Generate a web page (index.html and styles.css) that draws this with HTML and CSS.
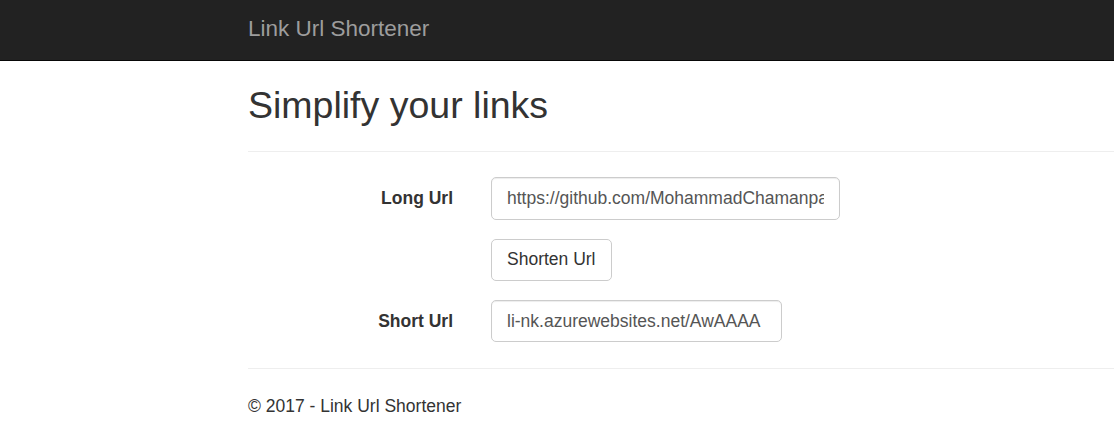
FILE: index.html
```html
<!DOCTYPE html>
<html lang="en">
<head>
<meta charset="utf-8">
<title>Link Url Shortener</title>
<link rel="stylesheet" href="styles.css">
</head>
<body>
<header class="navbar">
  <div class="container">
    <a class="brand" href="#">Link Url Shortener</a>
  </div>
</header>
<main class="container body-content">
  <h1 class="title">Simplify your links</h1>
  <hr class="rule">
  <form class="form">
    <div class="form-row">
      <label class="label" for="longUrl">Long Url</label>
      <input class="input input-long" id="longUrl" type="text" value="https://github.com/MohammadChamanpara/link">
    </div>
    <div class="form-row">
      <span class="label"></span>
      <button class="btn" type="button">Shorten Url</button>
    </div>
    <div class="form-row">
      <label class="label" for="shortUrl">Short Url</label>
      <input class="input input-short" id="shortUrl" type="text" value="li-nk.azurewebsites.net/AwAAAA">
    </div>
  </form>
  <hr class="rule rule-footer">
  <footer class="footer">
    <p class="copy">© 2017 - Link Url Shortener</p>
  </footer>
</main>
</body>
</html>
```
FILE: styles.css
```css
* { box-sizing: border-box; }
html, body { margin: 0; padding: 0; }
body {
  font-family: "Liberation Sans", Arial, sans-serif;
  font-size: 17.5px;
  line-height: 25px;
  color: #333;
  background: #fff;
  overflow: hidden;
}
.container {
  margin-left: 248px;
}
.navbar {
  background: #222;
  height: 61px;
  border-bottom: 1px solid #080808;
}
.brand {
  display: block;
  padding-top: 16px;
  font-size: 22.5px;
  line-height: 25px;
  color: #9d9d9d;
  text-decoration: none;
}
.body-content {
  padding-top: 24px;
}
.title {
  margin: 0;
  font-size: 37.5px;
  font-weight: 400;
  line-height: 41.25px;
  color: #333;
}
.rule {
  margin: 25px 0 0;
  border: 0;
  border-top: 1px solid #eee;
  height: 0;
}
.form {
  padding-top: 25px;
  display: flex;
  flex-direction: column;
  gap: 18.75px;
}
.form-row {
  display: flex;
  align-items: flex-start;
  gap: 38px;
}
.label {
  width: 205px;
  flex: none;
  text-align: right;
  font-weight: 700;
  padding-top: 8.75px;
  line-height: 25px;
}
.input {
  height: 42.5px;
  padding: 7.5px 15px;
  font-family: inherit;
  font-size: 17.5px;
  line-height: 25px;
  color: #555;
  background: #fff;
  border: 1px solid #ccc;
  border-radius: 5px;
  box-shadow: inset 0 1px 1px rgba(0,0,0,.075);
  outline: none;
}
.input-long { width: 349px; }
.input-short { width: 291px; }
.btn {
  height: 42.5px;
  padding: 7.5px 15px;
  font-family: inherit;
  font-size: 17.5px;
  line-height: 25px;
  color: #333;
  background: #fff;
  border: 1px solid #ccc;
  border-radius: 5px;
}
.rule-footer {
  margin-top: 26px;
}
.footer {
  padding-top: 25px;
}
.copy {
  margin: 0;
}
```
